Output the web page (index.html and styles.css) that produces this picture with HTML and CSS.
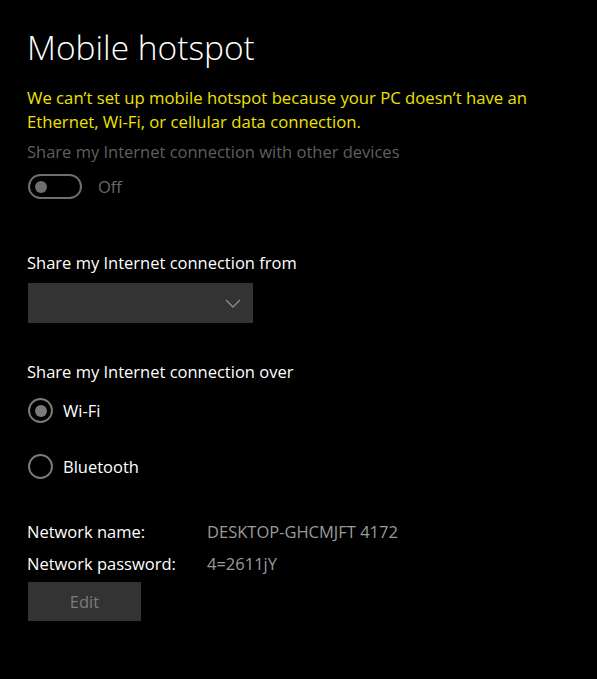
FILE: index.html
```html
<!DOCTYPE html>
<html>
<head>
<meta charset="utf-8">
<link rel="stylesheet" href="styles.css">
</head>
<body>
<main class="page">
  <h1 class="title">Mobile hotspot</h1>
  <p class="warning">We can’t set up mobile hotspot because your PC doesn’t have an Ethernet, Wi-Fi, or cellular data connection.</p>
  <p class="disabled-label">Share my Internet connection with other devices</p>
  <div class="toggle-row">
    <span class="toggle"><span class="knob"></span></span>
    <span class="toggle-text">Off</span>
  </div>

  <p class="label from-label">Share my Internet connection from</p>
  <div class="dropdown">
    <svg class="chevron" width="16" height="9" viewBox="0 0 16 9"><path d="M1 1 L8 8 L15 1" fill="none" stroke="#8a8a8a" stroke-width="1.4"/></svg>
  </div>

  <p class="label over-label">Share my Internet connection over</p>
  <div class="radio-row first">
    <span class="radio checked"><span class="dot"></span></span>
    <span class="radio-text">Wi-Fi</span>
  </div>
  <div class="radio-row second">
    <span class="radio"></span>
    <span class="radio-text">Bluetooth</span>
  </div>

  <div class="info">
    <span class="info-key">Network name:</span>
    <span class="info-val">DESKTOP-GHCMJFT 4172</span>
    <span class="info-key">Network password:</span>
    <span class="info-val">4=2611jY</span>
  </div>
  <div class="edit">Edit</div>
</main>
</body>
</html>
```

FILE: styles.css
```css
html, body {
  margin: 0;
  padding: 0;
  background: #000;
}
body {
  font-family: "Open Sans", "Noto Sans", sans-serif;
  color: #fff;
  width: 597px;
  height: 679px;
  overflow: hidden;
}
.page {
  padding: 26px 0 0 27px;
}
.title {
  margin: 0;
  font-weight: 300;
  font-size: 33.5px;
  line-height: 42px;
  height: 42px;
  letter-spacing: 0;
}
.warning {
  margin: 18px 0 0;
  width: 560px;
  font-size: 16.7px;
  line-height: 24px;
  color: #efe200;
}
.disabled-label {
  margin: 6px 0 0;
  font-size: 16.5px;
  line-height: 24px;
  color: #5f5f5f;
}
.toggle-row {
  margin-top: 10px;
  display: flex;
  align-items: center;
  height: 25px;
  padding-left: 1px;
}
.toggle {
  box-sizing: border-box;
  width: 54px;
  height: 25px;
  border: 2px solid #6f6f6f;
  border-radius: 13px;
  display: flex;
  align-items: center;
  padding-left: 5px;
}
.knob {
  width: 12px;
  height: 12px;
  border-radius: 50%;
  background: #6f6f6f;
}
.toggle-text {
  margin-left: 16px;
  font-size: 16.5px;
  color: #6a6a6a;
}
.label {
  margin: 0;
  font-size: 16.5px;
  line-height: 24px;
  color: #fff;
}
.from-label {
  margin-top: 52px;
}
.dropdown {
  margin-top: 8px;
  margin-left: 1px;
  width: 225px;
  height: 40px;
  background: #333;
  display: flex;
  align-items: center;
  justify-content: flex-end;
}
.chevron {
  margin-right: 12px;
}
.over-label {
  margin-top: 37px;
}
.radio-row {
  display: flex;
  align-items: center;
  height: 25px;
  padding-left: 1px;
}
.radio-row.first {
  margin-top: 14px;
}
.radio-row.second {
  margin-top: 31px;
}
.radio {
  box-sizing: border-box;
  width: 25px;
  height: 25px;
  border: 2px solid #7a7a7a;
  border-radius: 50%;
  display: flex;
  align-items: center;
  justify-content: center;
}
.dot {
  width: 12px;
  height: 12px;
  border-radius: 50%;
  background: #7a7a7a;
}
.radio-text {
  margin-left: 10px;
  font-size: 16.5px;
  color: #fff;
}
.info {
  margin-top: 41px;
  display: grid;
  grid-template-columns: 180px auto;
  row-gap: 8px;
  font-size: 16.5px;
  line-height: 24px;
}
.info-key {
  color: #fff;
}
.info-val {
  color: #9a9a9a;
}
.edit {
  margin-top: 6px;
  margin-left: 1px;
  width: 113px;
  height: 39px;
  background: #333;
  color: #7c7c7c;
  font-size: 16.5px;
  display: flex;
  align-items: center;
  justify-content: center;
}
```
